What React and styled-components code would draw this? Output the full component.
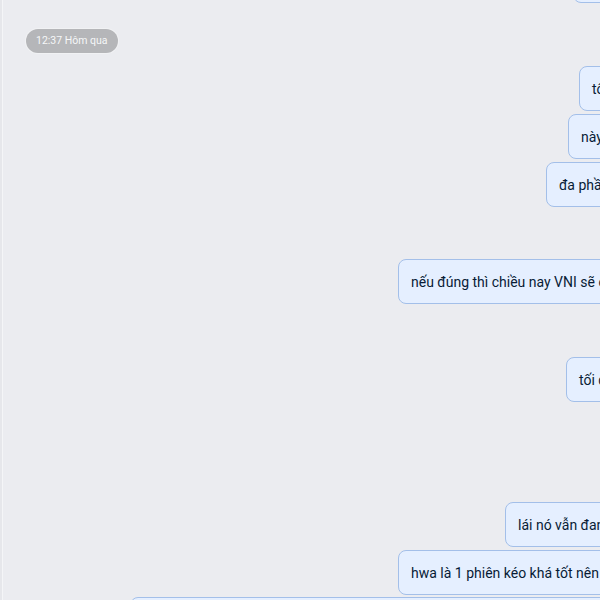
import styled, { createGlobalStyle } from 'styled-components'

const GlobalStyle = createGlobalStyle`
  html, body {
    margin: 0;
    padding: 0;
    background: #ebecf0;
    overflow: hidden;
  }
  body {
    font-family: Roboto, "Noto Sans", sans-serif;
  }
`

const Chat = styled.div`
  width: 600px;
  height: 600px;
  overflow: hidden;
  background: #ebecf0;
  box-sizing: border-box;
  border-left: 2px solid #e6e7eb;
  position: relative;
`

const Edge = styled.div`
  position: absolute;
  left: 0;
  top: 0;
  bottom: 0;
  width: 1px;
  background: #f4f5f7;
`

const List = styled.div`
  display: flex;
  flex-direction: column;
  margin-top: -42px;
  margin-right: -200px;
`

const Stamp = styled.div`
  align-self: flex-start;
  margin: 26px 0 13px 24px;
  height: 24px;
  padding: 0 10px;
  border-radius: 12px;
  background: #b5b6b9;
  color: #f6f7f8;
  font-size: 10.5px;
  line-height: 24px;
  box-shadow: 0 0 0 1px #f1f2f4;
`

const Bubble = styled.div`
  align-self: flex-end;
  box-sizing: border-box;
  width: ${p => p.$w}px;
  height: 45px;
  margin-top: ${p => p.$gap ?? 3}px;
  padding: 0 12px;
  display: flex;
  align-items: center;
  background: #e5efff;
  border: 1px solid #a3bfe9;
  border-radius: 8px;
  color: #081c36;
  font-size: 14px;
  white-space: nowrap;
  overflow: hidden;
`

const messages = [
  { left: 579, gap: 0, text: 'tôi thấy thị trường hôm nay khá ổn' },
  { left: 568, text: 'này thì mai có thể điều chỉnh nhẹ' },
  { left: 546, text: 'đa phần các mã đều xanh' },
  { left: 398, gap: 52, text: 'nếu đúng thì chiều nay VNI sẽ có thể vượt đỉnh' },
  { left: 566, gap: 53, text: 'tối qua Mỹ tăng mạnh' },
  { left: 505, gap: 100, text: 'lái nó vẫn đang gom hàng' },
  { left: 398, text: 'hwa là 1 phiên kéo khá tốt nên mai có thể điều chỉnh' },
  { left: 130, gap: 2, text: 'mọi người cân nhắc' },
]

// right edge of the message column, past the visible window
const RIGHT = 800

export default function App() {
  return (
    <>
      <GlobalStyle />
      <Chat>
        <Edge />
        <List>
          <Bubble $w={RIGHT - 573} $gap={0}>ok</Bubble>
          <Stamp>12:37 Hôm qua</Stamp>
          {messages.map((m, i) => (
            <Bubble key={i} $w={RIGHT - m.left} $gap={m.gap}>
              {m.text}
            </Bubble>
          ))}
        </List>
      </Chat>
    </>
  )
}
